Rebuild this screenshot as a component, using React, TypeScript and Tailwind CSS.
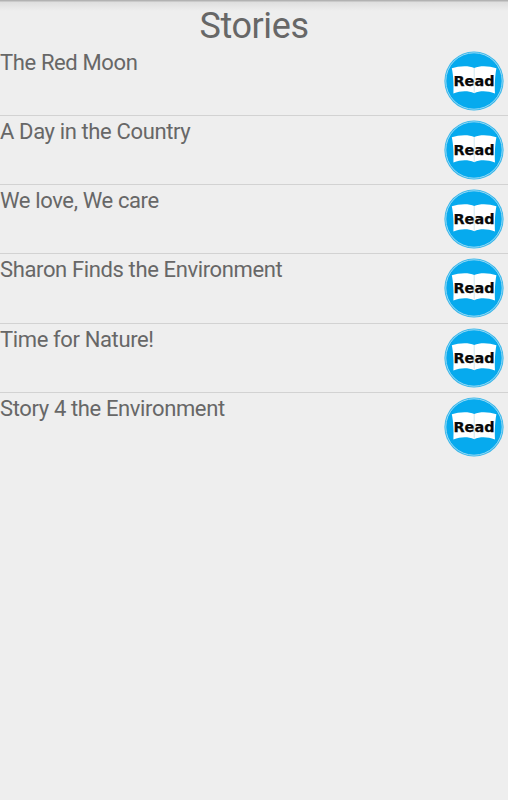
import React from 'react';

const stories = [
  "The Red Moon",
  "A Day in the Country",
  "We love, We care",
  "Sharon Finds the Environment",
  "Time for Nature!",
  "Story 4 the Environment",
];

const ReadButton: React.FC<{ title: string }> = ({ title }) => (
  <button aria-label={`Read ${title}`} className="mr-1 h-[60px] w-[60px] shrink-0">
    <svg viewBox="0 0 60 60" className="h-[60px] w-[60px]">
      {/* Disc with the pale inner ring */}
      <circle cx="30" cy="30" r="29.6" fill="#35b6ea" />
      <circle cx="30" cy="30" r="28.2" fill="#06aaee" stroke="#a5def6" strokeWidth="0.9" />
      {/* Open book */}
      <path
        d="M7.8 17.2 C15 14.8 25 14.4 30.2 17 C36 14.4 45 14.8 52.4 17.2 C51 24 50.6 34 51 42.4 C43 39.6 36 39.6 30.2 42.2 C24 39.6 17 39.6 9.4 42.4 C9.8 34 9.4 24 7.8 17.2 Z"
        fill="#fff"
      />
      <path d="M30.2 17 V42" stroke="#b9dcea" strokeWidth="0.7" />
      <text
        x="30"
        y="34.9"
        textAnchor="middle"
        textLength="41"
        lengthAdjust="spacingAndGlyphs"
        className="font-['DejaVu_Sans',sans-serif] text-[14.5px] font-bold"
        fill="#080808"
        stroke="#080808"
        strokeWidth="0.25"
      >
        Read
      </text>
    </svg>
  </button>
);

const App: React.FC = () => {
  return (
    <div className="min-h-screen bg-[#eeeeee] font-['Roboto',sans-serif] text-[#676767]">
      {/* Shadow cast by the action bar */}
      <div className="h-[11px] bg-[linear-gradient(to_bottom,#b0b0b0_0px,#b4b4b4_1px,#dedede_2px,#eeeeee_11px)]" />
      <h1 className="h-[36px] text-center text-[36px] leading-[30px] tracking-[-0.4px]">Stories</h1>
      <ul>
        {stories.map((title) => (
          <li
            key={title}
            className="flex h-[69.15px] items-start justify-between border-b border-[#d2d2d2] last:border-b-0"
          >
            <span className="pt-[3px] text-[22px] leading-[26px] tracking-[-0.37px] whitespace-nowrap">{title}</span>
            <div className="pt-1">
              <ReadButton title={title} />
            </div>
          </li>
        ))}
      </ul>
    </div>
  );
};

export default App;
